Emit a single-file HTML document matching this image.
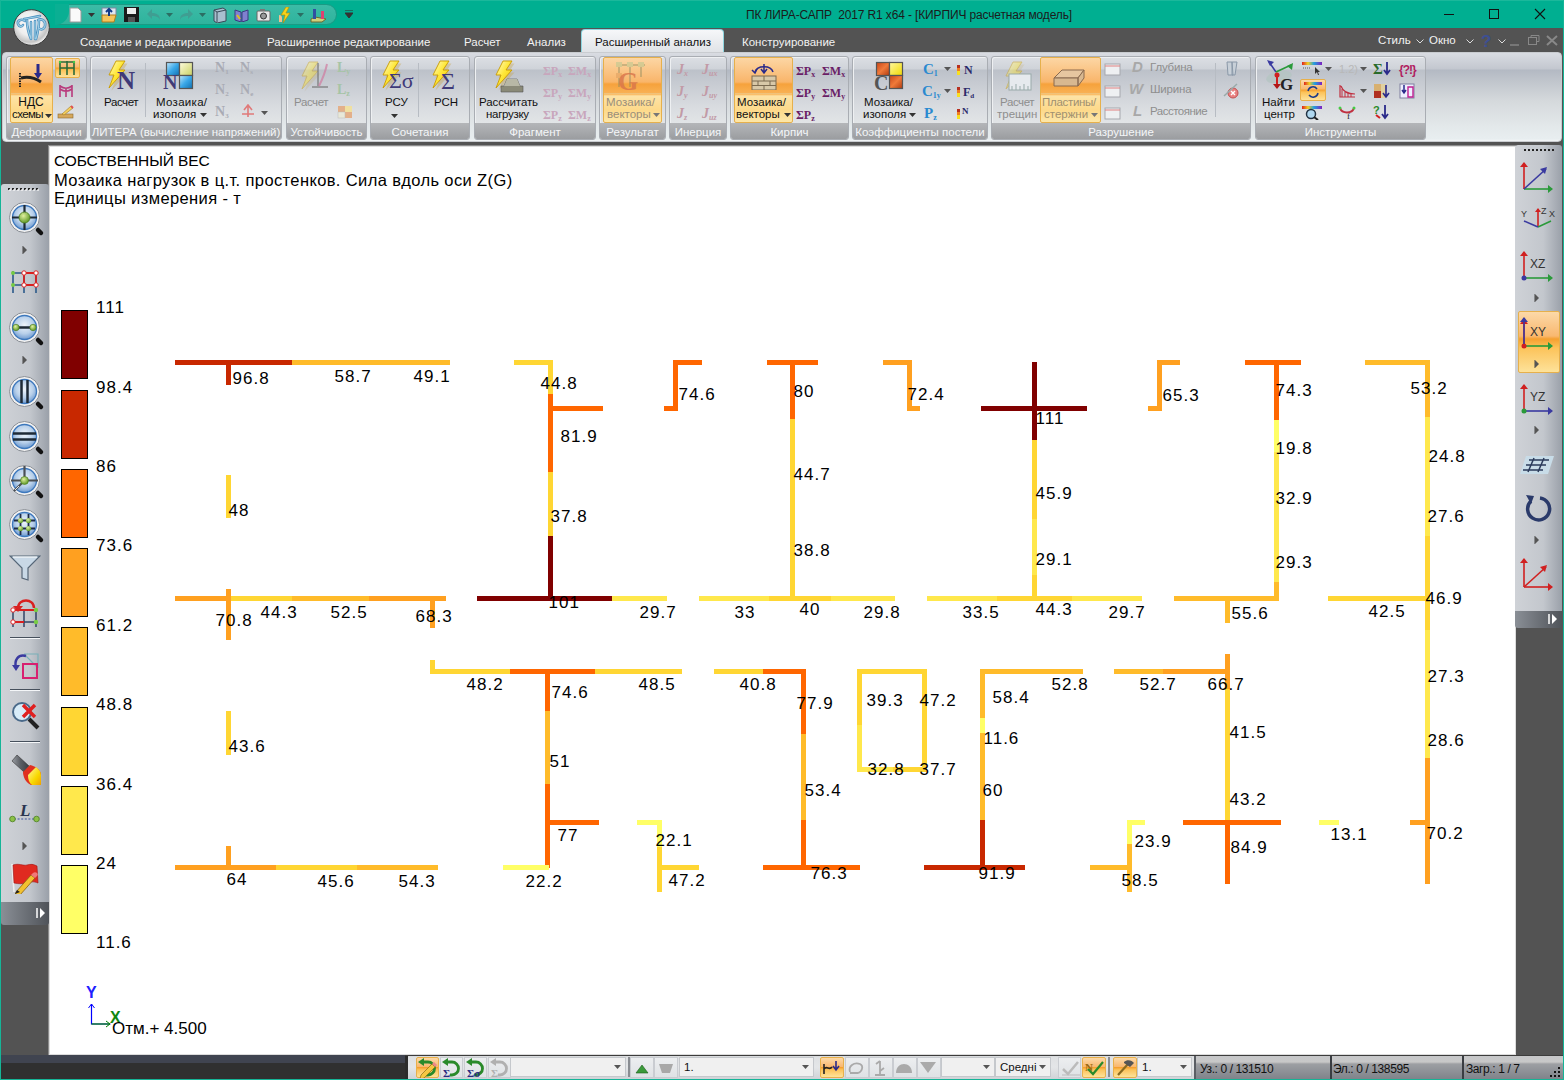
<!DOCTYPE html>
<html><head><meta charset="utf-8">
<style>
*{margin:0;padding:0;box-sizing:border-box}
html,body{width:1564px;height:1080px;overflow:hidden}
body{position:relative;background:#535353;font-family:"Liberation Sans",sans-serif;color:#000}
.a{position:absolute}
#cv{position:absolute;left:0;top:0;width:1564px;height:1080px}
#cv i{position:absolute;display:block}
#cv b{position:absolute;font-weight:normal;font-size:17px;line-height:17px;letter-spacing:1px;white-space:nowrap;color:#000}
/* title bar */
#tb{position:absolute;left:0;top:0;width:1564px;height:28px;background:#0aaf93}
#frameL{position:absolute;left:0;top:0;width:1px;height:1080px;background:#11b596}
#frameR{position:absolute;left:1563px;top:0;width:1px;height:1080px;background:#11b596}
#frameB{position:absolute;left:0;top:1079px;width:1564px;height:1px;background:#11b596}
.tab{position:absolute;top:34px;font-size:11.5px;color:#fff;white-space:nowrap;line-height:14px}
.grp{position:absolute;top:56px;height:84px;border-radius:3px;border:1px solid #a9adb3;box-shadow:inset 1px 1px 0 #eef0f2;background:linear-gradient(#dcdfe4 0px,#cfd3d9 12px,#bcc1c9 13px,#c6cad1 25px,#d9dce0 50px,#e2e5e7 67px);overflow:hidden}
.gl{position:absolute;left:0;right:0;bottom:0;height:16px;background:linear-gradient(#b4b6b9,#9b9da0);color:#f4f6f8;font-size:11.5px;line-height:18px;text-align:center;white-space:nowrap}
.bl{position:absolute;font-size:11.5px;line-height:13px;text-align:center;white-space:nowrap;color:#000}
.dis{color:#8e8e8e}
.sm{position:absolute;font-size:11.5px;line-height:13px;white-space:nowrap}
.hl{position:absolute;border:1px solid #e8b04a;border-radius:2px;background:linear-gradient(#fcd9a8 0%,#f9b870 45%,#f5a030 50%,#fcc35a 62%,#fde29a 100%)}
</style></head><body>
<div class="a" style="left:0px;top:0px;width:1564px;height:28px;background:#00af91;border-top:1px solid #1ab89b"></div>
<div class="a" style="left:55px;top:4px;width:282px;height:21px;background:linear-gradient(#3cbba6,#2fb39d);border:1px solid #1b9a84;border-radius:0 11px 11px 0;clip-path:none"></div>
<div class="a" style="left:55px;top:4px;width:14px;height:21px;background:#0aaf93;border-radius:0 0 14px 0"></div>
<svg class="a" style="left:69px;top:7px" width="13" height="16" viewBox="0 0 13 16"><path d="M1 1h8l3 3v11H1z" fill="#fafafa" stroke="#9a9a9a"/></svg>
<svg class="a" style="left:88px;top:13px" width="7" height="4" viewBox="0 0 7 4"><path d="M0 0h7L3.5 4z" fill="#333"/></svg>
<svg class="a" style="left:101px;top:7px" width="16" height="16" viewBox="0 0 16 16"><rect x="1" y="1" width="14" height="8" fill="#dfe6f0" stroke="#7a8aa0"/><path d="M1 8h14l-2 7H1z" fill="#f5c35a" stroke="#b07f1a"/><path d="M8 2v7M5 5l3-3 3 3" stroke="#123a8a" stroke-width="2" fill="none"/></svg>
<svg class="a" style="left:124px;top:7px" width="15" height="15" viewBox="0 0 15 15"><rect x="0" y="0" width="15" height="15" fill="#1a1a1a"/><rect x="3" y="1" width="9" height="6" fill="#eee"/><rect x="4" y="10" width="7" height="5" fill="#555"/></svg>
<svg class="a" style="left:146px;top:8px" width="15" height="13" viewBox="0 0 15 13"><path d="M6 1L1 6l5 5V8c4 0 7 1 8 4 0-5-3-7-8-7z" fill="#3f9e92"/></svg>
<svg class="a" style="left:166px;top:13px" width="7" height="4" viewBox="0 0 7 4"><path d="M0 0h7L3.5 4z" fill="#2b6e63"/></svg>
<svg class="a" style="left:179px;top:8px" width="15" height="13" viewBox="0 0 15 13"><path d="M9 1l5 5-5 5V8C5 8 2 9 1 12c0-5 3-7 8-7z" fill="#3f9e92"/></svg>
<svg class="a" style="left:199px;top:13px" width="7" height="4" viewBox="0 0 7 4"><path d="M0 0h7L3.5 4z" fill="#2b6e63"/></svg>
<svg class="a" style="left:212px;top:7px" width="15" height="16" viewBox="0 0 15 16"><path d="M2 3l9-2 3 2v11l-9 2-3-2z" fill="#a9bfcf" stroke="#3a4a58"/><path d="M5 5v10M2 3l3 2 9-2" stroke="#3a4a58" fill="none"/></svg>
<svg class="a" style="left:234px;top:8px" width="15" height="14" viewBox="0 0 15 14"><path d="M1 2l6 2v10l-6-2zM14 2l-6 2v10l6-2z" fill="#8080d0" stroke="#3a3a80"/><path d="M3 7l3 4" stroke="#e0c020" stroke-width="2"/></svg>
<svg class="a" style="left:256px;top:8px" width="15" height="14" viewBox="0 0 15 14"><rect x="1" y="3" width="13" height="10" rx="1" fill="#e8e8e8" stroke="#666"/><circle cx="7.5" cy="8" r="3" fill="#999" stroke="#333"/><rect x="4" y="1" width="5" height="2" fill="#777"/></svg>
<svg class="a" style="left:277px;top:7px" width="16" height="16" viewBox="0 0 16 16"><path d="M9 0l-5 8h4l-2 8 7-10H9l3-6z" fill="#f7d31a" stroke="#b38a00" stroke-width=".6"/><path d="M2 8c2 0 3 1 3 3v4H2z" fill="#f0c090"/></svg>
<svg class="a" style="left:297px;top:13px" width="7" height="4" viewBox="0 0 7 4"><path d="M0 0h7L3.5 4z" fill="#2b6e63"/></svg>
<svg class="a" style="left:310px;top:7px" width="17" height="16" viewBox="0 0 17 16"><path d="M1 12l4-2 11 2-4 3H1z" fill="#d0d07a" stroke="#6b6b30"/><rect x="3" y="2" width="3" height="10" fill="#3050a0"/><rect x="11" y="4" width="3" height="8" fill="#e04070"/></svg>
<svg class="a" style="left:345px;top:10px" width="8" height="9" viewBox="0 0 8 9"><path d="M0 0h8M0 3h8L4 8z" stroke="#333" fill="#333" stroke-width="1"/></svg>
<div class="a" style="left:746px;top:8.8px;font-size:12px;line-height:12px;color:#1c1c1c;white-space:nowrap;letter-spacing:-0.14px">ПК ЛИРА-САПР&nbsp; 2017 R1 x64 - [КИРПИЧ расчетная модель]</div>
<div class="a" style="left:1444px;top:14px;width:10px;height:1px;background:#111"></div>
<div class="a" style="left:1489px;top:9px;width:10px;height:10px;border:1px solid #111"></div>
<svg class="a" style="left:1534px;top:8px" width="12" height="12" viewBox="0 0 12 12"><path d="M1 1L11 11M11 1L1 11" stroke="#111" stroke-width="1.1"/></svg>
<div class="a" style="left:0px;top:28px;width:1564px;height:24px;background:#535353"></div>
<div class="a" style="left:581px;top:29px;width:143px;height:24px;background:linear-gradient(#f6f7f9,#dfe2e6);border:1px solid #8fd6e0;border-bottom:none;border-radius:4px 4px 0 0"></div>
<div class="a" style="left:80px;top:37.1px;font-size:11.5px;line-height:11.5px;color:#f2f2f2;white-space:nowrap;">Создание и редактирование</div>
<div class="a" style="left:267px;top:37.1px;font-size:11.5px;line-height:11.5px;color:#f2f2f2;white-space:nowrap;">Расширенное редактирование</div>
<div class="a" style="left:464px;top:37.1px;font-size:11.5px;line-height:11.5px;color:#f2f2f2;white-space:nowrap;">Расчет</div>
<div class="a" style="left:527px;top:37.1px;font-size:11.5px;line-height:11.5px;color:#f2f2f2;white-space:nowrap;">Анализ</div>
<div class="a" style="left:742px;top:37.1px;font-size:11.5px;line-height:11.5px;color:#f2f2f2;white-space:nowrap;">Конструирование</div>
<div class="a" style="left:595px;top:37.1px;font-size:11.5px;line-height:11.5px;color:#111;white-space:nowrap;">Расширенный анализ</div>
<div class="a" style="left:1378px;top:35.3px;font-size:11.5px;line-height:11.5px;color:#f2f2f2;white-space:nowrap;">Стиль</div>
<div class="a" style="left:1429px;top:35.3px;font-size:11.5px;line-height:11.5px;color:#f2f2f2;white-space:nowrap;">Окно</div>
<svg class="a" style="left:1416px;top:39px" width="8" height="5" viewBox="0 0 8 5"><path d="M0.5 0.5l3.5 3.5 3.5-3.5" stroke="#ddd" fill="none"/></svg>
<svg class="a" style="left:1466px;top:39px" width="8" height="5" viewBox="0 0 8 5"><path d="M0.5 0.5l3.5 3.5 3.5-3.5" stroke="#ddd" fill="none"/></svg>
<svg class="a" style="left:1498px;top:39px" width="8" height="5" viewBox="0 0 8 5"><path d="M0.5 0.5l3.5 3.5 3.5-3.5" stroke="#ddd" fill="none"/></svg>
<div class="a" style="left:1481px;top:32.6px;font-size:17px;line-height:17px;color:#3d4f93;white-space:nowrap;font-weight:bold">?</div>
<div class="a" style="left:1510px;top:44px;width:9px;height:2px;background:#777"></div>
<svg class="a" style="left:1528px;top:35px" width="12" height="10" viewBox="0 0 12 10"><rect x="0.5" y="2.5" width="8" height="7" fill="none" stroke="#888"/><path d="M3 2.5V.5h8v6h-2" fill="none" stroke="#888"/></svg>
<svg class="a" style="left:1546px;top:35px" width="12" height="11" viewBox="0 0 12 11"><path d="M1 1l10 9M11 1L1 10" stroke="#888" stroke-width="2"/></svg>
<svg class="a" style="left:11px;top:7px" width="41" height="41" viewBox="0 0 41 41"><defs><radialGradient id="lg" cx=".45" cy=".4" r=".6"><stop offset="0" stop-color="#ffffff"/><stop offset=".55" stop-color="#eeeeee"/><stop offset=".85" stop-color="#c4c4c4"/><stop offset="1" stop-color="#f4f4f4"/></radialGradient></defs><circle cx="20.5" cy="20.5" r="17.8" fill="url(#lg)" stroke="#3a3a3a" stroke-width="1"/><g fill="none" stroke="#4b8fbf" stroke-width="2.6" stroke-linecap="round"><path d="M14 14c-4-3-8 0-7 3 1 3 4 3 5 1"/><path d="M13 12c5-1 11-2 16-3"/><path d="M16 13c0 6 1 12 4 19M20 15v17M24 14v18M28 13c0 6-1 12-3 19"/><path d="M27 13c5-2 8 2 7 6-1 4-5 4-6 2"/></g><g fill="none" stroke="#9fd0e6" stroke-width="1.1" stroke-linecap="round"><path d="M14 14c-4-3-8 0-7 3 1 3 4 3 5 1"/><path d="M13 12c5-1 11-2 16-3"/><path d="M16 13c0 6 1 12 4 19M20 15v17M24 14v18M28 13c0 6-1 12-3 19"/><path d="M27 13c5-2 8 2 7 6-1 4-5 4-6 2"/></g></svg>
<div class="a" style="left:2px;top:52px;width:1560px;height:90px;background:linear-gradient(#d9dce2 0px,#c3c7cf 16px,#b3b9c3 17px,#c0c5cc 28px,#d5d9dc 48px,#e3e8ea 73px,#e8eef0 86px,#f4f6f7 88px);border-radius:4px;border:1px solid #c9ccd0"></div>
<div class="grp" style="left:6px;width:81px"><div class="gl">Деформации</div></div>
<div class="grp" style="left:90px;width:192px"><div class="gl">ЛИТЕРА (вычисление напряжений)</div></div>
<div class="grp" style="left:286px;width:81px"><div class="gl">Устойчивость</div></div>
<div class="grp" style="left:370px;width:100px"><div class="gl">Сочетания</div></div>
<div class="grp" style="left:474px;width:122px"><div class="gl">Фрагмент</div></div>
<div class="grp" style="left:599px;width:67px"><div class="gl">Результат</div></div>
<div class="grp" style="left:669px;width:58px"><div class="gl">Инерция</div></div>
<div class="grp" style="left:730px;width:119px"><div class="gl">Кирпич</div></div>
<div class="grp" style="left:852px;width:136px"><div class="gl">Коэффициенты постели</div></div>
<div class="grp" style="left:991px;width:260px"><div class="gl">Разрушение</div></div>
<div class="grp" style="left:1255px;width:171px"><div class="gl">Инструменты</div></div>
<div class="a" style="left:10px;top:57px;width:43px;height:66px;border:1px solid #e6b04c;border-radius:2px;background:linear-gradient(#fcd6a4 0px,#f9b56a 24px,#f6a23c 26px,#f9b256 36px,#fde3a6 38px,#fdd98a 52px,#fde7a8 64px)"></div>
<div class="a" style="left:11px;top:93px;width:41px;height:1px;background:#f0c27a"></div>
<svg class="a" style="left:17px;top:61px" width="28" height="28" viewBox="0 0 28 28"><path d="M3 12v14" stroke="#222" stroke-width="2" stroke-dasharray="1.5 1"/><path d="M4 17c8 -2 14 0 20 4" stroke="#222" stroke-width="3" fill="none"/><path d="M21 3v12" stroke="#2a2a8a" stroke-width="3"/><path d="M17 12l4 6 4-6z" fill="#2a2a8a"/></svg>
<div class="a" style="left:-119px;width:300px;text-align:center;top:96.4px;font-size:12px;line-height:12px;color:#111;white-space:nowrap;">НДС</div>
<div class="a" style="left:12px;top:109.4px;font-size:11.5px;line-height:11.5px;color:#111;white-space:nowrap;letter-spacing:-0.6px">схемы</div>
<svg class="a" style="left:45px;top:114px" width="7" height="4" viewBox="0 0 7 4"><path d="M0 0h7L3.5 4z" fill="#333"/></svg>
<div class="hl" style="left:55px;top:58px;width:25px;height:20px"></div>
<svg class="a" style="left:58px;top:60px" width="18" height="15" viewBox="0 0 18 15"><path d="M2 1v14M9 1v14M16 1v14M2 2h14M2 8h14" stroke="#2b6b3a" stroke-width="1.6" fill="none"/><circle cx="2" cy="2" r="1.2" fill="#4c4"/><circle cx="16" cy="2" r="1.2" fill="#4c4"/></svg>
<svg class="a" style="left:58px;top:83px" width="16" height="14" viewBox="0 0 16 14"><path d="M2 2v12M14 2v12M8 6v8M2 3c4 3 8 3 12 0M2 6c4 3 8 3 12 0" stroke="#b83a7c" stroke-width="1.6" fill="none"/></svg>
<svg class="a" style="left:57px;top:105px" width="17" height="14" viewBox="0 0 17 14"><rect x="1" y="9" width="15" height="4" fill="#d6a85a" stroke="#8a6a30" stroke-width=".6"/><path d="M5 9l9-8 2 2-9 7z" fill="#f5d060" stroke="#a07820" stroke-width=".6"/><path d="M14 1l2 2" stroke="#e05050" stroke-width="2"/></svg>
<svg width="0" height="0" style="position:absolute"><defs><linearGradient id="lt" x1="0" y1="0" x2="1" y2="1"><stop offset="0" stop-color="#fffbd0"/><stop offset=".45" stop-color="#ffe83a"/><stop offset="1" stop-color="#f0c000"/></linearGradient><linearGradient id="sqb" x1="0" y1="0" x2="1" y2="1"><stop offset="0" stop-color="#bfe6fb"/><stop offset=".5" stop-color="#3aa8e8"/><stop offset="1" stop-color="#1070b0"/></linearGradient><linearGradient id="sqy" x1="0" y1="0" x2="1" y2="1"><stop offset="0" stop-color="#fffce0"/><stop offset="1" stop-color="#c8d060"/></linearGradient><linearGradient id="sqo" x1="0" y1="0" x2="1" y2="1"><stop offset="0" stop-color="#c84418"/><stop offset=".5" stop-color="#f07a3a"/><stop offset="1" stop-color="#b03a10"/></linearGradient><linearGradient id="sqy2" x1="0" y1="0" x2="1" y2="1"><stop offset="0" stop-color="#fff8a0"/><stop offset="1" stop-color="#f0d800"/></linearGradient></defs></svg>
<svg class="a" style="left:106px;top:60px" width="22" height="32" viewBox="0 0 22 32"><g transform="scale(1.0)" opacity="1"><path d="M11 2h9l-6 9h6L4 29l5-13H4z" fill="#c9a040" opacity=".35" transform="translate(1.5,1.5)"/><path d="M10 1h9l-6 9h6L3 28l5-13H3z" fill="url(#lt)" stroke="#c89a00" stroke-width=".9" stroke-linejoin="round"/></g></svg>
<div class="a" style="left:117px;top:67.8px;font-size:25px;line-height:25px;color:#3f3a78;white-space:nowrap;font-family:Liberation Serif;font-weight:bold">N</div>
<div class="a" style="left:104px;top:96.9px;font-size:11.5px;line-height:11.5px;color:#111;white-space:nowrap;letter-spacing:-0.4px">Расчет</div>
<div class="a" style="left:145px;top:63px;width:1px;height:54px;background:#b7bcc3"></div>
<svg class="a" style="left:164px;top:61px" width="30" height="30" viewBox="0 0 30 30"><rect x="2.5" y="1.5" width="13" height="13" fill="url(#sqb)" stroke="#555" stroke-width="1.2"/><rect x="15.5" y="1.5" width="13" height="13" fill="url(#sqy)" stroke="#555" stroke-width="1.2"/><rect x="15.5" y="14.5" width="13" height="13" fill="url(#sqb)" stroke="#555" stroke-width="1.2"/></svg>
<div class="a" style="left:163px;top:72.1px;font-size:20px;line-height:20px;color:#3f3a78;white-space:nowrap;font-family:Liberation Serif;font-weight:bold">N</div>
<div class="a" style="left:156px;top:96.9px;font-size:11.5px;line-height:11.5px;color:#111;white-space:nowrap;letter-spacing:0.3px">Мозаика/</div>
<div class="a" style="left:153px;top:109.4px;font-size:11.5px;line-height:11.5px;color:#111;white-space:nowrap;">изополя</div>
<svg class="a" style="left:200px;top:113px" width="7" height="4" viewBox="0 0 7 4"><path d="M0 0h7L3.5 4z" fill="#333"/></svg>
<div class="a" style="left:215px;top:61.1px;font-size:14px;line-height:14px;color:#a9abb4;white-space:nowrap;font-family:Liberation Serif;font-weight:bold;line-height:14px">N<span style="font-size:7px;position:relative;top:2px">1</span></div>
<div class="a" style="left:215px;top:83.1px;font-size:14px;line-height:14px;color:#a9abb4;white-space:nowrap;font-family:Liberation Serif;font-weight:bold;line-height:14px">N<span style="font-size:7px;position:relative;top:2px">2</span></div>
<div class="a" style="left:215px;top:105.1px;font-size:14px;line-height:14px;color:#a9abb4;white-space:nowrap;font-family:Liberation Serif;font-weight:bold;line-height:14px">N<span style="font-size:7px;position:relative;top:2px">3</span></div>
<div class="a" style="left:240px;top:61.1px;font-size:14px;line-height:14px;color:#a9abb4;white-space:nowrap;font-family:Liberation Serif;font-weight:bold;line-height:14px">N<span style="font-size:7px;position:relative;top:2px">s</span></div>
<div class="a" style="left:240px;top:83.1px;font-size:14px;line-height:14px;color:#a9abb4;white-space:nowrap;font-family:Liberation Serif;font-weight:bold;line-height:14px">N<span style="font-size:7px;position:relative;top:2px">e</span></div>
<svg class="a" style="left:240px;top:104px" width="16" height="14" viewBox="0 0 16 14"><path d="M8 13V2M4 6l4-5 4 5M2 10h12" stroke="#e07a7a" stroke-width="1.6" fill="none"/></svg>
<svg class="a" style="left:261px;top:111px" width="7" height="4" viewBox="0 0 7 4"><path d="M0 0h7L3.5 4z" fill="#555"/></svg>
<svg class="a" style="left:299px;top:61px" width="22" height="32" viewBox="0 0 22 32"><g transform="scale(1.0)" opacity="0.45"><path d="M11 2h9l-6 9h6L4 29l5-13H4z" fill="#c9a040" opacity=".35" transform="translate(1.5,1.5)"/><path d="M10 1h9l-6 9h6L3 28l5-13H3z" fill="url(#lt)" stroke="#c89a00" stroke-width=".9" stroke-linejoin="round"/></g></svg>
<svg class="a" style="left:311px;top:61px" width="18" height="30" viewBox="0 0 18 30"><path d="M7 2v24M1 26h16" stroke="#777" stroke-width="2" opacity=".6"/><path d="M16 3c-2 10-5 16-8 22" stroke="#d07aa0" stroke-width="2" fill="none" opacity=".7"/></svg>
<div class="a" style="left:294px;top:96.9px;font-size:11.5px;line-height:11.5px;color:#8e8e8e;white-space:nowrap;letter-spacing:-0.4px">Расчет</div>
<div class="a" style="left:337px;top:61.1px;font-size:14px;line-height:14px;color:#a6c4a6;white-space:nowrap;font-family:Liberation Serif;font-weight:bold">L<span style="font-size:8px;position:relative;top:2px">y</span></div>
<div class="a" style="left:337px;top:83.1px;font-size:14px;line-height:14px;color:#a6c4a6;white-space:nowrap;font-family:Liberation Serif;font-weight:bold">L<span style="font-size:8px;position:relative;top:2px">z</span></div>
<svg class="a" style="left:337px;top:105px" width="16" height="14" viewBox="0 0 16 14"><rect x="1" y="1" width="7" height="6" fill="#e3b08a"/><rect x="8" y="1" width="7" height="6" fill="#f0e0a0"/><rect x="8" y="7" width="7" height="6" fill="#e3b08a"/><rect x="1" y="7" width="7" height="6" fill="#e8e8d8" stroke="#bbb" stroke-width=".5"/></svg>
<svg class="a" style="left:380px;top:60px" width="22" height="32" viewBox="0 0 22 32"><g transform="scale(1.0)" opacity="1"><path d="M11 2h9l-6 9h6L4 29l5-13H4z" fill="#c9a040" opacity=".35" transform="translate(1.5,1.5)"/><path d="M10 1h9l-6 9h6L3 28l5-13H3z" fill="url(#lt)" stroke="#c89a00" stroke-width=".9" stroke-linejoin="round"/></g></svg>
<div class="a" style="left:389px;top:70.4px;font-size:22px;line-height:22px;color:#3f3a78;white-space:nowrap;font-family:Liberation Serif">Σσ</div>
<div class="a" style="left:385px;top:96.9px;font-size:11.5px;line-height:11.5px;color:#111;white-space:nowrap;">РСУ</div>
<svg class="a" style="left:391px;top:114px" width="7" height="4" viewBox="0 0 7 4"><path d="M0 0h7L3.5 4z" fill="#333"/></svg>
<div class="a" style="left:418px;top:63px;width:1px;height:54px;background:#b7bcc3"></div>
<svg class="a" style="left:430px;top:60px" width="22" height="32" viewBox="0 0 22 32"><g transform="scale(1.0)" opacity="1"><path d="M11 2h9l-6 9h6L4 29l5-13H4z" fill="#c9a040" opacity=".35" transform="translate(1.5,1.5)"/><path d="M10 1h9l-6 9h6L3 28l5-13H3z" fill="url(#lt)" stroke="#c89a00" stroke-width=".9" stroke-linejoin="round"/></g></svg>
<div class="a" style="left:441px;top:68.7px;font-size:24px;line-height:24px;color:#3f3a78;white-space:nowrap;font-family:Liberation Serif">Σ</div>
<div class="a" style="left:434px;top:96.9px;font-size:11.5px;line-height:11.5px;color:#111;white-space:nowrap;">РСН</div>
<svg class="a" style="left:493px;top:60px" width="22" height="32" viewBox="0 0 22 32"><g transform="scale(1.0)" opacity="1"><path d="M11 2h9l-6 9h6L4 29l5-13H4z" fill="#c9a040" opacity=".35" transform="translate(1.5,1.5)"/><path d="M10 1h9l-6 9h6L3 28l5-13H3z" fill="url(#lt)" stroke="#c89a00" stroke-width=".9" stroke-linejoin="round"/></g></svg>
<svg class="a" style="left:500px;top:78px" width="24" height="15" viewBox="0 0 24 15"><path d="M7 1h10l3 7h3v6H1V8h3z" fill="#8a8a78" stroke="#555" stroke-width=".6"/><path d="M7 1h10l3 7H4z" fill="#b8b8a6"/></svg>
<div class="a" style="left:479px;top:96.9px;font-size:11.5px;line-height:11.5px;color:#111;white-space:nowrap;letter-spacing:-0.1px">Рассчитать</div>
<div class="a" style="left:486px;top:109.4px;font-size:11.5px;line-height:11.5px;color:#111;white-space:nowrap;letter-spacing:-0.3px">нагрузку</div>
<div class="a" style="left:543px;top:64.8px;font-size:12px;line-height:12px;color:#c8a6bc;white-space:nowrap;font-family:Liberation Serif;font-weight:bold">ΣP<span style="font-size:8px;position:relative;top:2px">x</span></div>
<div class="a" style="left:543px;top:86.8px;font-size:12px;line-height:12px;color:#c8a6bc;white-space:nowrap;font-family:Liberation Serif;font-weight:bold">ΣP<span style="font-size:8px;position:relative;top:2px">y</span></div>
<div class="a" style="left:543px;top:108.8px;font-size:12px;line-height:12px;color:#c8a6bc;white-space:nowrap;font-family:Liberation Serif;font-weight:bold">ΣP<span style="font-size:8px;position:relative;top:2px">z</span></div>
<div class="a" style="left:568px;top:64.8px;font-size:12px;line-height:12px;color:#c8a6bc;white-space:nowrap;font-family:Liberation Serif;font-weight:bold">ΣM<span style="font-size:8px;position:relative;top:2px">x</span></div>
<div class="a" style="left:568px;top:86.8px;font-size:12px;line-height:12px;color:#c8a6bc;white-space:nowrap;font-family:Liberation Serif;font-weight:bold">ΣM<span style="font-size:8px;position:relative;top:2px">y</span></div>
<div class="a" style="left:568px;top:108.8px;font-size:12px;line-height:12px;color:#c8a6bc;white-space:nowrap;font-family:Liberation Serif;font-weight:bold">ΣM<span style="font-size:8px;position:relative;top:2px">z</span></div>
<div class="a" style="left:603px;top:57px;width:59px;height:66px;border:1px solid #e6b04c;border-radius:2px;background:linear-gradient(#fcd6a4 0px,#f9b56a 24px,#f6a23c 26px,#f9b256 36px,#fde3a6 38px,#fdd98a 52px,#fde7a8 64px)"></div>
<div class="a" style="left:604px;top:93px;width:57px;height:1px;background:#f0c27a"></div>
<svg class="a" style="left:615px;top:62px" width="34" height="30" viewBox="0 0 34 30"><g opacity=".55"><path d="M4 3h26M4 3v22M15 3v22M26 3v12" stroke="#8a8a60" stroke-width="1.5" fill="none"/><rect x="1" y="0" width="6" height="5" fill="#b8c890"/><rect x="12" y="0" width="6" height="5" fill="#b8c890"/><rect x="23" y="0" width="6" height="5" fill="#b8c890"/><rect x="1" y="11" width="6" height="5" fill="#e0a060"/></g></svg>
<div class="a" style="left:618px;top:69.0px;font-size:26px;line-height:26px;color:#d9744a;white-space:nowrap;font-family:Liberation Serif;font-weight:bold;opacity:.8">G</div>
<div class="a" style="left:606px;top:96.9px;font-size:11.5px;line-height:11.5px;color:#9a8e7a;white-space:nowrap;">Мозаика/</div>
<div class="a" style="left:607px;top:109.4px;font-size:11.5px;line-height:11.5px;color:#9a8e7a;white-space:nowrap;">векторы</div>
<svg class="a" style="left:653px;top:113px" width="7" height="4" viewBox="0 0 7 4"><path d="M0 0h7L3.5 4z" fill="#777"/></svg>
<div class="a" style="left:677px;top:63.1px;font-size:14px;line-height:14px;color:#c29aa6;white-space:nowrap;font-family:Liberation Serif;font-weight:bold;font-style:italic">J<span style="font-size:8px;position:relative;top:2px">x</span></div>
<div class="a" style="left:677px;top:85.1px;font-size:14px;line-height:14px;color:#c29aa6;white-space:nowrap;font-family:Liberation Serif;font-weight:bold;font-style:italic">J<span style="font-size:8px;position:relative;top:2px">y</span></div>
<div class="a" style="left:677px;top:107.1px;font-size:14px;line-height:14px;color:#c29aa6;white-space:nowrap;font-family:Liberation Serif;font-weight:bold;font-style:italic">J<span style="font-size:8px;position:relative;top:2px">z</span></div>
<div class="a" style="left:702px;top:63.1px;font-size:14px;line-height:14px;color:#c29aa6;white-space:nowrap;font-family:Liberation Serif;font-weight:bold;font-style:italic">J<span style="font-size:8px;position:relative;top:2px">ux</span></div>
<div class="a" style="left:702px;top:85.1px;font-size:14px;line-height:14px;color:#c29aa6;white-space:nowrap;font-family:Liberation Serif;font-weight:bold;font-style:italic">J<span style="font-size:8px;position:relative;top:2px">uy</span></div>
<div class="a" style="left:702px;top:107.1px;font-size:14px;line-height:14px;color:#c29aa6;white-space:nowrap;font-family:Liberation Serif;font-weight:bold;font-style:italic">J<span style="font-size:8px;position:relative;top:2px">uz</span></div>
<div class="a" style="left:734px;top:57px;width:59px;height:66px;border:1px solid #e6b04c;border-radius:2px;background:linear-gradient(#fcd6a4 0px,#f9b56a 24px,#f6a23c 26px,#f9b256 36px,#fde3a6 38px,#fdd98a 52px,#fde7a8 64px)"></div>
<div class="a" style="left:735px;top:93px;width:57px;height:1px;background:#f0c27a"></div>
<svg class="a" style="left:749px;top:62px" width="30" height="28" viewBox="0 0 30 28"><path d="M6 10c2-7 16-7 18 0" stroke="#2a2a8a" stroke-width="1.5" fill="none"/><path d="M15 2v8M12 7l3 4 3-4M3 8l3 3 2-4" stroke="#2a2a8a" stroke-width="1.5" fill="none"/><rect x="3" y="14" width="24" height="14" fill="#d8c8a8" stroke="#7a6a50"/><path d="M3 19h24M3 23.5h24M15 14v5M9 19v4.5M21 19v4.5M15 23.5v4.5" stroke="#7a6a50"/></svg>
<div class="a" style="left:737px;top:96.9px;font-size:11.5px;line-height:11.5px;color:#111;white-space:nowrap;">Мозаика/</div>
<div class="a" style="left:736px;top:109.4px;font-size:11.5px;line-height:11.5px;color:#111;white-space:nowrap;">векторы</div>
<svg class="a" style="left:784px;top:113px" width="7" height="4" viewBox="0 0 7 4"><path d="M0 0h7L3.5 4z" fill="#333"/></svg>
<div class="a" style="left:796px;top:64.8px;font-size:12px;line-height:12px;color:#6a1e66;white-space:nowrap;font-family:Liberation Serif;font-weight:bold">ΣP<span style="font-size:8px;position:relative;top:2px">x</span></div>
<div class="a" style="left:796px;top:86.8px;font-size:12px;line-height:12px;color:#6a1e66;white-space:nowrap;font-family:Liberation Serif;font-weight:bold">ΣP<span style="font-size:8px;position:relative;top:2px">y</span></div>
<div class="a" style="left:796px;top:108.8px;font-size:12px;line-height:12px;color:#6a1e66;white-space:nowrap;font-family:Liberation Serif;font-weight:bold">ΣP<span style="font-size:8px;position:relative;top:2px">z</span></div>
<div class="a" style="left:822px;top:64.8px;font-size:12px;line-height:12px;color:#6a1e66;white-space:nowrap;font-family:Liberation Serif;font-weight:bold">ΣM<span style="font-size:8px;position:relative;top:2px">x</span></div>
<div class="a" style="left:822px;top:86.8px;font-size:12px;line-height:12px;color:#6a1e66;white-space:nowrap;font-family:Liberation Serif;font-weight:bold">ΣM<span style="font-size:8px;position:relative;top:2px">y</span></div>
<svg class="a" style="left:875px;top:61px" width="30" height="30" viewBox="0 0 30 30"><rect x="1.5" y="1.5" width="13" height="13" fill="url(#sqo)" stroke="#555" stroke-width="1.2"/><rect x="14.5" y="1.5" width="13" height="13" fill="url(#sqy2)" stroke="#555" stroke-width="1.2"/><rect x="14.5" y="14.5" width="13" height="13" fill="url(#sqo)" stroke="#555" stroke-width="1.2"/></svg>
<div class="a" style="left:874px;top:73.1px;font-size:20px;line-height:20px;color:#555;white-space:nowrap;font-family:Liberation Serif;font-weight:bold">C</div>
<div class="a" style="left:864px;top:96.9px;font-size:11.5px;line-height:11.5px;color:#111;white-space:nowrap;">Мозаика/</div>
<div class="a" style="left:863px;top:109.4px;font-size:11.5px;line-height:11.5px;color:#111;white-space:nowrap;">изополя</div>
<svg class="a" style="left:909px;top:113px" width="7" height="4" viewBox="0 0 7 4"><path d="M0 0h7L3.5 4z" fill="#333"/></svg>
<div class="a" style="left:923px;top:62.3px;font-size:15px;line-height:15px;color:#2a8ad0;white-space:nowrap;font-family:Liberation Serif;font-weight:bold">C<span style="font-size:8px;position:relative;top:2px">1</span></div>
<div class="a" style="left:922px;top:84.3px;font-size:15px;line-height:15px;color:#2a8ad0;white-space:nowrap;font-family:Liberation Serif;font-weight:bold">C<span style="font-size:8px;position:relative;top:2px">1y</span></div>
<div class="a" style="left:924px;top:106.3px;font-size:15px;line-height:15px;color:#2a8ad0;white-space:nowrap;font-family:Liberation Serif;font-weight:bold">P<span style="font-size:8px;position:relative;top:2px">z</span></div>
<svg class="a" style="left:944px;top:67px" width="7" height="4" viewBox="0 0 7 4"><path d="M0 0h7L3.5 4z" fill="#555"/></svg>
<svg class="a" style="left:944px;top:89px" width="7" height="4" viewBox="0 0 7 4"><path d="M0 0h7L3.5 4z" fill="#555"/></svg>
<svg class="a" style="left:956px;top:62px" width="18" height="14" viewBox="0 0 18 14"><rect x="1" y="3" width="3" height="3" fill="#b83020"/><rect x="1" y="6" width="3" height="3" fill="#f08020"/><rect x="1" y="9" width="3" height="4" fill="#f8e020"/></svg>
<svg class="a" style="left:956px;top:84px" width="18" height="14" viewBox="0 0 18 14"><rect x="1" y="3" width="3" height="3" fill="#b83020"/><rect x="1" y="6" width="3" height="3" fill="#f08020"/><rect x="1" y="9" width="3" height="4" fill="#f8e020"/></svg>
<svg class="a" style="left:956px;top:106px" width="18" height="14" viewBox="0 0 18 14"><rect x="1" y="3" width="3" height="3" fill="#b83020"/><rect x="1" y="6" width="3" height="3" fill="#f08020"/><rect x="1" y="9" width="3" height="4" fill="#f8e020"/></svg>
<div class="a" style="left:964px;top:63.8px;font-size:12px;line-height:12px;color:#2a2a6a;white-space:nowrap;font-family:Liberation Serif;font-weight:bold">N</div>
<div class="a" style="left:963px;top:85.8px;font-size:12px;line-height:12px;color:#2a2a6a;white-space:nowrap;font-family:Liberation Serif;font-weight:bold">F<span style="font-size:7px;position:relative;top:2px">d</span></div>
<div class="a" style="left:962px;top:107.4px;font-size:9px;line-height:9px;color:#2a2a6a;white-space:nowrap;font-family:Liberation Serif;font-weight:bold">N</div>
<svg class="a" style="left:1003px;top:61px" width="22" height="32" viewBox="0 0 22 32"><g transform="scale(1.0)" opacity="0.45"><path d="M11 2h9l-6 9h6L4 29l5-13H4z" fill="#c9a040" opacity=".35" transform="translate(1.5,1.5)"/><path d="M10 1h9l-6 9h6L3 28l5-13H3z" fill="url(#lt)" stroke="#c89a00" stroke-width=".9" stroke-linejoin="round"/></g></svg>
<svg class="a" style="left:1008px;top:73px" width="24" height="18" viewBox="0 0 24 18"><rect x="1" y="1" width="22" height="16" fill="#e6eaee" stroke="#9aa" /><path d="M4 17v-4M8 17v-6M12 17v-4M16 17v-6M20 17v-4" stroke="#9aa"/></svg>
<div class="a" style="left:1000px;top:96.9px;font-size:11.5px;line-height:11.5px;color:#8e8e8e;white-space:nowrap;letter-spacing:-0.4px">Расчет</div>
<div class="a" style="left:997px;top:109.4px;font-size:11.5px;line-height:11.5px;color:#8e8e8e;white-space:nowrap;">трещин</div>
<div class="a" style="left:1040px;top:57px;width:61px;height:66px;border:1px solid #e6b04c;border-radius:2px;background:linear-gradient(#fcd6a4 0px,#f9b56a 24px,#f6a23c 26px,#f9b256 36px,#fde3a6 38px,#fdd98a 52px,#fde7a8 64px)"></div>
<div class="a" style="left:1041px;top:93px;width:59px;height:1px;background:#f0c27a"></div>
<svg class="a" style="left:1053px;top:69px" width="32" height="18" viewBox="0 0 32 18"><path d="M1 9l8-8h22l-6 8z" fill="#e6c6a0" stroke="#8a6a50"/><path d="M1 9h24v8H1zM25 9l6-8v8l-6 8z" fill="#d8b890" stroke="#8a6a50"/></svg>
<div class="a" style="left:1042px;top:96.9px;font-size:11.5px;line-height:11.5px;color:#a09070;white-space:nowrap;letter-spacing:-0.3px">Пластины/</div>
<div class="a" style="left:1044px;top:109.4px;font-size:11.5px;line-height:11.5px;color:#a09070;white-space:nowrap;">стержни</div>
<svg class="a" style="left:1091px;top:113px" width="7" height="4" viewBox="0 0 7 4"><path d="M0 0h7L3.5 4z" fill="#777"/></svg>
<svg class="a" style="left:1104px;top:63px" width="17" height="13" viewBox="0 0 17 13"><rect x="1" y="1" width="15" height="11" fill="#eef0f2" stroke="#a6a8ae"/><path d="M1 3h15" stroke="#e08080"/></svg>
<svg class="a" style="left:1104px;top:85px" width="17" height="13" viewBox="0 0 17 13"><rect x="1" y="1" width="15" height="11" fill="#eef0f2" stroke="#a6a8ae"/><path d="M1 3h15" stroke="#e08080"/></svg>
<svg class="a" style="left:1104px;top:107px" width="17" height="13" viewBox="0 0 17 13"><rect x="1" y="1" width="15" height="11" fill="#eef0f2" stroke="#a6a8ae"/><path d="M1 3h15" stroke="#e08080"/></svg>
<div class="a" style="left:1132px;top:59.3px;font-size:15px;line-height:15px;color:#a8a8a8;white-space:nowrap;font-weight:bold;font-style:italic">D</div>
<div class="a" style="left:1129px;top:81.3px;font-size:15px;line-height:15px;color:#a8a8a8;white-space:nowrap;font-weight:bold;font-style:italic">W</div>
<div class="a" style="left:1133px;top:103.3px;font-size:15px;line-height:15px;color:#a8a8a8;white-space:nowrap;font-weight:bold;font-style:italic">L</div>
<div class="a" style="left:1150px;top:62.3px;font-size:11.5px;line-height:11.5px;color:#8e8e8e;white-space:nowrap;letter-spacing:-0.2px">Глубина</div>
<div class="a" style="left:1150px;top:84.3px;font-size:11.5px;line-height:11.5px;color:#8e8e8e;white-space:nowrap;letter-spacing:-0.2px">Ширина</div>
<div class="a" style="left:1150px;top:106.3px;font-size:11.5px;line-height:11.5px;color:#8e8e8e;white-space:nowrap;letter-spacing:-0.5px">Расстояние</div>
<div class="a" style="left:1215px;top:63px;width:1px;height:54px;background:#b7bcc3"></div>
<svg class="a" style="left:1224px;top:60px" width="16" height="16" viewBox="0 0 16 16"><path d="M3 2h5l1 13H4zM8 2h5l-2 13H8z" fill="#c8d0d8" stroke="#8a98a8"/></svg>
<svg class="a" style="left:1223px;top:83px" width="18" height="16" viewBox="0 0 18 16"><circle cx="10" cy="10" r="5" fill="#e88080" stroke="#c05050"/><path d="M8 8l4 4M12 8l-4 4" stroke="#fff" stroke-width="1.4"/><path d="M1 13L14 1" stroke="#9aa" stroke-width="1.5"/></svg>
<svg class="a" style="left:1265px;top:58px" width="34" height="34" viewBox="0 0 34 34"><ellipse cx="14" cy="19" rx="13" ry="6" fill="#b4c4c2" opacity=".8" transform="rotate(-12 14 19)"/><path d="M11 14L4 4" stroke="#3a3aa0" stroke-width="1.6"/><path d="M2 2l7 2-4 4z" fill="#3a3aa0"/><path d="M11 14l15-7" stroke="#2a9a3a" stroke-width="1.6"/><path d="M28 5l-1 7-5-4z" fill="#2a9a3a"/><circle cx="12" cy="17" r="2.5" fill="#d02020"/><path d="M12 18v10" stroke="#d02020" stroke-width="2"/><path d="M8 26l4 5 4-5z" fill="#b01818"/></svg>
<div class="a" style="left:1280px;top:75.6px;font-size:17px;line-height:17px;color:#222;white-space:nowrap;font-family:Liberation Serif;font-weight:bold">G</div>
<div class="a" style="left:1262px;top:96.9px;font-size:11.5px;line-height:11.5px;color:#111;white-space:nowrap;">Найти</div>
<div class="a" style="left:1264px;top:109.4px;font-size:11.5px;line-height:11.5px;color:#111;white-space:nowrap;">центр</div>
<svg class="a" style="left:1301px;top:61px" width="22" height="14" viewBox="0 0 22 14"><rect x="1" y="1" width="20" height="3" fill="url(#rb)"/><defs><linearGradient id="rb"><stop offset="0" stop-color="#e02020"/><stop offset=".3" stop-color="#f0d020"/><stop offset=".6" stop-color="#20a0e0"/><stop offset="1" stop-color="#8020c0"/></linearGradient></defs><path d="M2 7h8" stroke="#555" stroke-dasharray="1 1"/><path d="M14 6l5 5-2 0 1 3-1 0-1-3-2 2z" fill="#333"/></svg>
<svg class="a" style="left:1325px;top:67px" width="7" height="4" viewBox="0 0 7 4"><path d="M0 0h7L3.5 4z" fill="#555"/></svg>
<div class="hl" style="left:1300px;top:79px;width:26px;height:22px"></div>
<svg class="a" style="left:1303px;top:81px" width="20" height="18" viewBox="0 0 20 18"><rect x="1" y="1" width="18" height="3" fill="url(#rb)"/><path d="M5 10a5 5 0 0 1 9-2M15 12a5 5 0 0 1-9 2" stroke="#1a3a8a" stroke-width="1.5" fill="none"/></svg>
<svg class="a" style="left:1301px;top:105px" width="22" height="15" viewBox="0 0 22 15"><rect x="1" y="1" width="20" height="3" fill="url(#rb)"/><circle cx="10" cy="9" r="4.5" fill="#b0d8f0" stroke="#234" stroke-width="1.5"/><path d="M13 12l4 3" stroke="#222" stroke-width="2"/></svg>
<div class="a" style="left:1339px;top:63.7px;font-size:11px;line-height:11px;color:#b8b8b8;white-space:nowrap;">1.2)</div>
<svg class="a" style="left:1360px;top:67px" width="7" height="4" viewBox="0 0 7 4"><path d="M0 0h7L3.5 4z" fill="#555"/></svg>
<svg class="a" style="left:1360px;top:89px" width="7" height="4" viewBox="0 0 7 4"><path d="M0 0h7L3.5 4z" fill="#555"/></svg>
<svg class="a" style="left:1339px;top:84px" width="17" height="14" viewBox="0 0 17 14"><path d="M1 1v12h15M2 2c2 6 8 8 14 8" stroke="#c03040" fill="none" stroke-width="1.2"/><path d="M3 5v8M6 8v5M9 9v4M12 10v3" stroke="#c03040"/></svg>
<svg class="a" style="left:1338px;top:105px" width="18" height="15" viewBox="0 0 18 15"><path d="M2 3c2 6 12 6 14 0" stroke="#c03040" stroke-width="2" fill="none"/><circle cx="2" cy="3" r="1.5" fill="#4c4"/><circle cx="16" cy="3" r="1.5" fill="#4c4"/><text x="9" y="14" font-size="9" font-family="Liberation Serif" fill="#222">f</text></svg>
<div class="a" style="left:1373px;top:62.3px;font-size:15px;line-height:15px;color:#2a6a2a;white-space:nowrap;font-family:Liberation Serif;font-weight:bold">Σ</div>
<svg class="a" style="left:1383px;top:61px" width="8" height="15" viewBox="0 0 8 15"><path d="M4 1v12M1 9l3 4 3-4" stroke="#2a2a8a" stroke-width="1.8" fill="none"/></svg>
<svg class="a" style="left:1373px;top:83px" width="18" height="16" viewBox="0 0 18 16"><rect x="1" y="1" width="7" height="7" fill="#d8b070"/><rect x="1" y="8" width="7" height="7" fill="#b03020"/><rect x="8" y="1" width="5" height="14" fill="#e0d0a0"/><path d="M13 2v12M10 10l3 4 3-4" stroke="#2a2a8a" stroke-width="1.6" fill="none"/></svg>
<svg class="a" style="left:1372px;top:104px" width="18" height="16" viewBox="0 0 18 16"><text x="1" y="10" font-size="11" font-weight="bold" fill="#2a8a2a" font-family="Liberation Sans">?</text><path d="M4 11l4 3" stroke="#d02020" stroke-width="2"/><path d="M13 1v13M10 10l3 4 3-4" stroke="#2a2a8a" stroke-width="1.8" fill="none"/></svg>
<div class="a" style="left:1399px;top:63.8px;font-size:12px;line-height:12px;color:#b02060;white-space:nowrap;font-weight:bold;letter-spacing:-1px">{?!}</div>
<svg class="a" style="left:1399px;top:83px" width="17" height="16" viewBox="0 0 17 16"><rect x="1" y="1" width="14" height="14" fill="#eef" stroke="#8080a0"/><path d="M9 4h5v10H9z" fill="none" stroke="#c02090" stroke-width="1.4"/><path d="M5 2v7M3 7l2 3 2-3" stroke="#2a2a8a" stroke-width="1.5" fill="none"/></svg>
<div class="a" style="left:48px;top:145px;width:1468px;height:911px;background:#dcdcdc;border-left:1px solid #8c8c8c;border-top:1px solid #8c8c8c"></div>
<div class="a" style="left:50px;top:147px;width:1465px;height:907px;background:#fff"></div>
<div class="a" style="left:1px;top:184px;width:48px;height:720px;border-radius:3px 3px 0 0;background:linear-gradient(90deg,#cfd2d7 0%,#c3c7cd 60%,#9aa0a9 100%)"></div>
<div class="a" style="left:1px;top:902px;width:48px;height:23px;background:linear-gradient(90deg,#8a8f96,#4f5359);border-radius:0 0 3px 3px"></div>
<svg class="a" style="left:36px;top:907px" width="10" height="12" viewBox="0 0 10 12"><path d="M1 1v10" stroke="#fff" stroke-width="1.5"/><path d="M4 1l5 5-5 5z" fill="#fff"/></svg>
<svg class="a" style="left:8px;top:188px" width="32" height="4" viewBox="0 0 32 4"><rect x="0" y="0" width="2" height="2" fill="#222"/><rect x="1" y="1" width="2" height="2" fill="#fff" opacity=".6"/><rect x="4" y="0" width="2" height="2" fill="#222"/><rect x="5" y="1" width="2" height="2" fill="#fff" opacity=".6"/><rect x="8" y="0" width="2" height="2" fill="#222"/><rect x="9" y="1" width="2" height="2" fill="#fff" opacity=".6"/><rect x="12" y="0" width="2" height="2" fill="#222"/><rect x="13" y="1" width="2" height="2" fill="#fff" opacity=".6"/><rect x="16" y="0" width="2" height="2" fill="#222"/><rect x="17" y="1" width="2" height="2" fill="#fff" opacity=".6"/><rect x="20" y="0" width="2" height="2" fill="#222"/><rect x="21" y="1" width="2" height="2" fill="#fff" opacity=".6"/><rect x="24" y="0" width="2" height="2" fill="#222"/><rect x="25" y="1" width="2" height="2" fill="#fff" opacity=".6"/><rect x="28" y="0" width="2" height="2" fill="#222"/><rect x="29" y="1" width="2" height="2" fill="#fff" opacity=".6"/></svg>
<svg width="0" height="0" style="position:absolute"><defs><radialGradient id="zg" cx=".5" cy=".4" r=".6"><stop offset="0" stop-color="#eef4fa"/><stop offset=".6" stop-color="#b8d0ea"/><stop offset="1" stop-color="#6e9ad0"/></radialGradient><radialGradient id="gd" cx=".4" cy=".35" r=".6"><stop offset="0" stop-color="#e0f0a0"/><stop offset="1" stop-color="#6aa030"/></radialGradient></defs></svg>
<svg class="a" style="left:7px;top:200px" width="38" height="38" viewBox="0 0 38 38"><path d="M31 30l3 3" stroke="#111" stroke-width="4.5" stroke-linecap="round"/><circle cx="17.5" cy="17.5" r="15" fill="#f2f2f2" stroke="#8a8f96" stroke-width="1"/><circle cx="17.5" cy="17.5" r="12" fill="url(#zg)" stroke="#3d78bd" stroke-width="1.3"/><path d="M17.5 5v25M5 17.5h25" stroke="#1e2a36" stroke-width="2.2"/><circle cx="17.5" cy="17.5" r="5.5" fill="url(#gd)" stroke="#4a7a20" stroke-width=".8"/></svg>
<svg class="a" style="left:22px;top:246px" width="6" height="8" viewBox="0 0 6 8"><path d="M0 0v8" stroke="#444"/><path d="M1 0l4 4-4 4z" fill="#555"/></svg>
<svg class="a" style="left:10px;top:267px" width="30" height="30" viewBox="0 0 30 30"><path d="M3 4v22M14 4v22M26 4v22M3 6h23M3 18h23" stroke="#2b5a8a" stroke-width="1.6" fill="none"/><path d="M14 6h12M14 18h12M14 6v12M26 6v12" stroke="#d82020" stroke-width="1.8"/><circle cx="3" cy="6" r="2" fill="#7c4"/><circle cx="3" cy="18" r="2" fill="#7c4"/><circle cx="14" cy="6" r="2.2" fill="#fff" stroke="#d22"/><circle cx="26" cy="6" r="2.2" fill="#fff" stroke="#d22"/><circle cx="14" cy="18" r="2.2" fill="#fff" stroke="#d22"/><circle cx="26" cy="18" r="2.2" fill="#fff" stroke="#d22"/></svg>
<svg class="a" style="left:7px;top:310px" width="38" height="38" viewBox="0 0 38 38"><path d="M31 30l3 3" stroke="#111" stroke-width="4.5" stroke-linecap="round"/><circle cx="17.5" cy="17.5" r="15" fill="#f2f2f2" stroke="#8a8f96" stroke-width="1"/><circle cx="17.5" cy="17.5" r="12" fill="url(#zg)" stroke="#3d78bd" stroke-width="1.3"/><path d="M9 17.5h17" stroke="#1e2a36" stroke-width="2.5"/><circle cx="9" cy="17.5" r="3.2" fill="url(#gd)" stroke="#4a7a20" stroke-width=".6"/><circle cx="26" cy="17.5" r="3.2" fill="url(#gd)" stroke="#4a7a20" stroke-width=".6"/></svg>
<svg class="a" style="left:22px;top:356px" width="6" height="8" viewBox="0 0 6 8"><path d="M0 0v8" stroke="#444"/><path d="M1 0l4 4-4 4z" fill="#555"/></svg>
<svg class="a" style="left:7px;top:374px" width="38" height="38" viewBox="0 0 38 38"><path d="M31 30l3 3" stroke="#111" stroke-width="4.5" stroke-linecap="round"/><circle cx="17.5" cy="17.5" r="15" fill="#f2f2f2" stroke="#8a8f96" stroke-width="1"/><circle cx="17.5" cy="17.5" r="12" fill="url(#zg)" stroke="#3d78bd" stroke-width="1.3"/><path d="M14.5 6v23M20.5 6v23" stroke="#1e2a36" stroke-width="2.5"/></svg>
<svg class="a" style="left:7px;top:419px" width="38" height="38" viewBox="0 0 38 38"><path d="M31 30l3 3" stroke="#111" stroke-width="4.5" stroke-linecap="round"/><circle cx="17.5" cy="17.5" r="15" fill="#f2f2f2" stroke="#8a8f96" stroke-width="1"/><circle cx="17.5" cy="17.5" r="12" fill="url(#zg)" stroke="#3d78bd" stroke-width="1.3"/><path d="M6 14.5h23M6 20.5h23" stroke="#1e2a36" stroke-width="2.5"/></svg>
<svg class="a" style="left:7px;top:463px" width="38" height="38" viewBox="0 0 38 38"><path d="M31 30l3 3" stroke="#111" stroke-width="4.5" stroke-linecap="round"/><circle cx="17.5" cy="17.5" r="15" fill="#f2f2f2" stroke="#8a8f96" stroke-width="1"/><circle cx="17.5" cy="17.5" r="12" fill="url(#zg)" stroke="#3d78bd" stroke-width="1.3"/><path d="M17.5 3v14.5M4 17.5h27" stroke="#4a4f55" stroke-width="2.2"/><path d="M17.5 17.5L7 28" stroke="#4a4f55" stroke-width="2.2"/><path d="M12 23L8 27" stroke="#dfe3e8" stroke-width="1"/><circle cx="17.5" cy="17.5" r="4" fill="url(#gd)" stroke="#4a7a20" stroke-width=".6"/></svg>
<svg class="a" style="left:7px;top:507px" width="38" height="38" viewBox="0 0 38 38"><path d="M31 30l3 3" stroke="#111" stroke-width="4.5" stroke-linecap="round"/><circle cx="17.5" cy="17.5" r="15" fill="#f2f2f2" stroke="#8a8f96" stroke-width="1"/><circle cx="17.5" cy="17.5" r="12" fill="url(#zg)" stroke="#3d78bd" stroke-width="1.3"/><path d="M7 13.5h21M7 21.5h21M13.5 7v21M21.5 7v21" stroke="#1e2a46" stroke-width="1.8"/><circle cx="13.5" cy="13.5" r="2.6" fill="url(#gd)"/><circle cx="21.5" cy="13.5" r="2.6" fill="url(#gd)"/><circle cx="13.5" cy="21.5" r="2.6" fill="url(#gd)"/><circle cx="21.5" cy="21.5" r="2.6" fill="url(#gd)"/></svg>
<svg class="a" style="left:9px;top:554px" width="32" height="28" viewBox="0 0 32 28"><path d="M1 2h30L19 14v12l-6-2V14z" fill="#c8d8e6" stroke="#556677" stroke-width="1.2"/><path d="M4 3h24" stroke="#fff"/></svg>
<svg class="a" style="left:10px;top:595px" width="32" height="34" viewBox="0 0 32 34"><path d="M3 14v18M14 14v18M26 14v18M3 15h23M3 27h23" stroke="#334466" stroke-width="1.5" fill="none"/><path d="M3 15h23M3 27h11" stroke="#d82020" stroke-width="1.8"/><path d="M8 13c0-10 16-10 16 0" stroke="#d82020" stroke-width="2.5" fill="none"/><path d="M3 11l5 6 5-6z" fill="#d82020"/><circle cx="3" cy="15" r="2.2" fill="#fff" stroke="#d22"/><circle cx="26" cy="15" r="2.2" fill="#7c4"/><circle cx="3" cy="27" r="2.2" fill="#fff" stroke="#d22"/><circle cx="26" cy="27" r="2.2" fill="#7c4"/></svg>
<div class="a" style="left:10px;top:638px;width:30px;height:1px;background:#f4f6f8"></div>
<div class="a" style="left:10px;top:637px;width:30px;height:1px;background:#46505c"></div>
<svg class="a" style="left:10px;top:648px" width="32" height="32" viewBox="0 0 32 32"><path d="M14 6l14 14M14 6h14v14" stroke="#7ab0b8" stroke-width="1.2" fill="none"/><rect x="13" y="16" width="14" height="14" fill="none" stroke="#d82070" stroke-width="2"/><path d="M16 8c-8-2-12 4-10 12" stroke="#3a3aa0" stroke-width="2.5" fill="none"/><path d="M2 17l4 6 4-6z" fill="#3a3aa0"/></svg>
<div class="a" style="left:10px;top:690px;width:30px;height:1px;background:#f4f6f8"></div>
<div class="a" style="left:10px;top:689px;width:30px;height:1px;background:#46505c"></div>
<svg class="a" style="left:10px;top:700px" width="32" height="32" viewBox="0 0 32 32"><circle cx="12" cy="12" r="9" fill="#d8ecf8" stroke="#4a6a8a" stroke-width="2"/><path d="M19 19l9 9" stroke="#222" stroke-width="4"/><path d="M13 5l12 12M25 5L13 17" stroke="#e02020" stroke-width="3.5"/></svg>
<div class="a" style="left:10px;top:742px;width:30px;height:1px;background:#f4f6f8"></div>
<div class="a" style="left:10px;top:741px;width:30px;height:1px;background:#46505c"></div>
<svg class="a" style="left:9px;top:753px" width="34" height="34" viewBox="0 0 34 34"><defs><linearGradient id="fl1" x1="0" y1="0" x2="1" y2="0"><stop offset="0" stop-color="#9a9ea4"/><stop offset=".5" stop-color="#5a5e64"/><stop offset="1" stop-color="#3a3e44"/></linearGradient><linearGradient id="fl2" x1="0" y1="0" x2="1" y2="1"><stop offset="0" stop-color="#fff7a0"/><stop offset=".6" stop-color="#f8d800"/><stop offset="1" stop-color="#f0a000"/></linearGradient></defs><path d="M3 8l5-6 12 11-5 6z" fill="url(#fl1)" stroke="#333" stroke-width=".6"/><path d="M14 19l7-7c5 1 10 4 11 9v11H22c-5-2-8-8-8-13z" fill="#e03020"/><path d="M19 22l8-8c3 2 5 5 5 8v10H23c-3-2-4-6-4-10z" fill="url(#fl2)"/></svg>
<svg class="a" style="left:8px;top:802px" width="34" height="22" viewBox="0 0 34 22"><text x="12" y="14" font-family="Liberation Serif" font-style="italic" font-weight="bold" font-size="17" fill="#2a3550">L</text><path d="M6 17h22" stroke="#6a7ab0" stroke-width="1.5" stroke-dasharray="2 1.6"/><circle cx="4.5" cy="17" r="2.8" fill="#8cc048" stroke="#4a8020" stroke-width=".8"/><circle cx="28.5" cy="17" r="2.8" fill="#8cc048" stroke="#4a8020" stroke-width=".8"/></svg>
<svg class="a" style="left:22px;top:842px" width="6" height="8" viewBox="0 0 6 8"><path d="M0 0v8" stroke="#444"/><path d="M1 0l4 4-4 4z" fill="#555"/></svg>
<svg class="a" style="left:9px;top:862px" width="32" height="32" viewBox="0 0 32 32"><path d="M3 2l2 28" stroke="#eee" stroke-width="1.6"/><path d="M4 3c6-2 10 1 14 0s6-1 10 1l1 17c-5-2-7-1-11 0s-8 1-13 0z" fill="#e02a20" stroke="#a01010" stroke-width=".6"/><path d="M7 30l15-17 4 3-15 17-5 1z" fill="#f2c230" stroke="#8a6010" stroke-width=".8"/><path d="M22 13l2-2c1-1 3-1 4 0s1 2 0 3l-2 2z" fill="#f07a7a"/><path d="M6 32l2-4 3 2z" fill="#222"/></svg>
<div class="a" style="left:1515px;top:145px;width:47px;height:466px;border-radius:3px 3px 0 0;background:linear-gradient(90deg,#cfd2d7 0%,#c3c7cd 60%,#9aa0a9 100%)"></div>
<div class="a" style="left:1515px;top:611px;width:47px;height:17px;background:linear-gradient(90deg,#8a8f96,#4f5359);border-radius:0 0 3px 3px"></div>
<svg class="a" style="left:1548px;top:613px" width="10" height="12" viewBox="0 0 10 12"><path d="M1 1v10" stroke="#fff" stroke-width="1.5"/><path d="M4 1l5 5-5 5z" fill="#fff"/></svg>
<svg class="a" style="left:1524px;top:149px" width="32" height="4" viewBox="0 0 32 4"><rect x="0" y="0" width="2" height="2" fill="#222"/><rect x="4" y="0" width="2" height="2" fill="#222"/><rect x="8" y="0" width="2" height="2" fill="#222"/><rect x="12" y="0" width="2" height="2" fill="#222"/><rect x="16" y="0" width="2" height="2" fill="#222"/><rect x="20" y="0" width="2" height="2" fill="#222"/><rect x="24" y="0" width="2" height="2" fill="#222"/><rect x="28" y="0" width="2" height="2" fill="#222"/></svg>
<svg class="a" style="left:1518px;top:159px" width="40" height="36" viewBox="0 0 40 36"><path d="M6 30V4" stroke="#d02020" stroke-width="1.6"/><path d="M2 8l4-5 4 5z" fill="#d02020"/><path d="M6 30h28" stroke="#2a9a3a" stroke-width="1.6"/><path d="M30 26l5 4-5 4z" fill="#2a9a3a"/><path d="M6 30L28 10" stroke="#3a3aa0" stroke-width="1.6"/><path d="M22 10l7-2-2 7z" fill="#3a3aa0"/></svg>
<svg class="a" style="left:1518px;top:203px" width="40" height="36" viewBox="0 0 40 36"><path d="M20 24V6" stroke="#d02020" stroke-width="1.6"/><path d="M17 9l3-4 3 4z" fill="#d02020"/><path d="M20 24l13-6" stroke="#2a9a3a" stroke-width="1.6"/><path d="M20 24L6 18" stroke="#3a3aa0" stroke-width="1.6"/><text x="23" y="11" font-size="9" fill="#333" font-family="Liberation Sans">Z</text><text x="3" y="14" font-size="9" fill="#333" font-family="Liberation Sans">Y</text><text x="31" y="14" font-size="9" fill="#333" font-family="Liberation Sans">X</text></svg>
<svg class="a" style="left:1518px;top:248px" width="40" height="36" viewBox="0 0 40 36"><path d="M6 30V4" stroke="#d02020" stroke-width="1.6"/><path d="M2 8l4-5 4 5z" fill="#d02020"/><path d="M6 30h28" stroke="#2a9a3a" stroke-width="1.6"/><path d="M30 26l5 4-5 4z" fill="#2a9a3a"/><text x="12" y="20" font-family="Liberation Sans" font-size="12" fill="#333">XZ</text><circle cx="6" cy="30" r="2.5" fill="#3a3aa0"/></svg>
<svg class="a" style="left:1534px;top:294px" width="6" height="8" viewBox="0 0 6 8"><path d="M0 0v8" stroke="#444"/><path d="M1 0l4 4-4 4z" fill="#555"/></svg>
<div class="a" style="left:1518px;top:311px;width:42px;height:62px;border:1px solid #e6b04c;border-radius:2px;background:linear-gradient(#fcd9a8 0%,#f9b870 40%,#f5a030 45%,#fcc35a 60%,#fde29a 100%)"></div>
<svg class="a" style="left:1518px;top:316px" width="40" height="36" viewBox="0 0 40 36"><path d="M6 30V4" stroke="#d02020" stroke-width="1.6"/><path d="M2 8l4-5 4 5z" fill="#d02020"/><path d="M6 30h28" stroke="#2a9a3a" stroke-width="1.6"/><path d="M30 26l5 4-5 4z" fill="#2a9a3a"/><text x="12" y="20" font-family="Liberation Sans" font-size="12" fill="#333">XY</text><circle cx="6" cy="30" r="2.5" fill="#d02020"/></svg>
<svg class="a" style="left:1518px;top:314px" width="40" height="36" viewBox="0 0 40 36"><path d="M6 30V4" stroke="#3a3aa0" stroke-width="1.6"/><path d="M2 8l4-5 4 5z" fill="#3a3aa0"/></svg>
<svg class="a" style="left:1534px;top:360px" width="6" height="8" viewBox="0 0 6 8"><path d="M0 0v8" stroke="#444"/><path d="M1 0l4 4-4 4z" fill="#555"/></svg>
<svg class="a" style="left:1518px;top:381px" width="40" height="36" viewBox="0 0 40 36"><path d="M6 30V4" stroke="#d02020" stroke-width="1.6"/><path d="M2 8l4-5 4 5z" fill="#d02020"/><path d="M6 30h28" stroke="#3a3aa0" stroke-width="1.6"/><path d="M30 26l5 4-5 4z" fill="#3a3aa0"/><text x="12" y="20" font-family="Liberation Sans" font-size="12" fill="#333">YZ</text><circle cx="6" cy="30" r="2.5" fill="#2a9a3a"/></svg>
<svg class="a" style="left:1534px;top:426px" width="6" height="8" viewBox="0 0 6 8"><path d="M0 0v8" stroke="#444"/><path d="M1 0l4 4-4 4z" fill="#555"/></svg>
<svg class="a" style="left:1520px;top:454px" width="36" height="22" viewBox="0 0 36 22"><path d="M6 2h28l-6 18H0z" fill="#c8dce8"/><path d="M9 6h20M6 11h20M3 16h20M14 4l-6 14M24 4l-6 14" stroke="#2a3a5a" stroke-width="1.5"/></svg>
<svg class="a" style="left:1522px;top:493px" width="32" height="32" viewBox="0 0 32 32"><path d="M9 8a11 11 0 1 0 9-3" stroke="#2a3a6a" stroke-width="3.5" fill="none"/><path d="M4 2l8 1-3 8z" fill="#2a3a6a"/></svg>
<svg class="a" style="left:1534px;top:536px" width="6" height="8" viewBox="0 0 6 8"><path d="M0 0v8" stroke="#444"/><path d="M1 0l4 4-4 4z" fill="#555"/></svg>
<svg class="a" style="left:1518px;top:555px" width="40" height="36" viewBox="0 0 40 36"><path d="M6 32V4" stroke="#d02020" stroke-width="1.6"/><path d="M2 8l4-5 4 5z" fill="#d02020"/><path d="M6 32h28" stroke="#d02020" stroke-width="1.6"/><path d="M30 28l5 4-5 4z" fill="#d02020"/><path d="M6 32L28 12" stroke="#d02020" stroke-width="1.6"/><path d="M22 12l7-2-2 7z" fill="#d02020"/></svg>
<div class="a" style="left:1px;top:1055px;width:1562px;height:8px;background:#404450"></div>
<div class="a" style="left:1px;top:1063px;width:1562px;height:16px;background:#303030"></div>
<div class="a" style="left:405px;top:1055px;width:1158px;height:24px;background:linear-gradient(#c9cbce 0px,#dfe1e3 2px,#e4e6e8 12px,#d0d3d7 24px);border-left:3px solid #2c2c2c"></div>
<div class="a" style="left:440px;top:1057px;width:23px;height:21px;background:linear-gradient(#eceef0,#dfe2e5);border:1px solid #c9ccd1"></div>
<div class="a" style="left:464px;top:1057px;width:23px;height:21px;background:linear-gradient(#eceef0,#dfe2e5);border:1px solid #c9ccd1"></div>
<div class="a" style="left:488px;top:1057px;width:23px;height:21px;background:linear-gradient(#eceef0,#dfe2e5);border:1px solid #c9ccd1"></div>
<div class="hl" style="left:416px;top:1057px;width:23px;height:21px"></div>
<svg class="a" style="left:417px;top:1058px" width="22" height="20" viewBox="0 0 22 20"><path d="M6 4h5a6.5 6.5 0 0 1 0 13H9" stroke="#2a8a2a" stroke-width="2.8" fill="none"/><path d="M1 4l6-4v8z" fill="#2a8a2a"/><path d="M4 17l11-11 3 3-11 11-4 1z" fill="#f5c842" stroke="#8a6a10" stroke-width=".7"/><path d="M15 6l2-2 3 3-2 2z" fill="#e88"/></svg>
<svg class="a" style="left:441px;top:1058px" width="22" height="20" viewBox="0 0 22 20"><path d="M6 4h5a6.5 6.5 0 0 1 0 13H9" stroke="#2a8a2a" stroke-width="2.8" fill="none"/><path d="M1 4l6-4v8z" fill="#2a8a2a"/><text x="2" y="19" font-size="11" font-family="Liberation Serif" font-weight="bold" fill="#2a2a80">Σ</text></svg>
<svg class="a" style="left:465px;top:1058px" width="22" height="20" viewBox="0 0 22 20"><path d="M6 4h5a6.5 6.5 0 0 1 0 13H9" stroke="#2a8a2a" stroke-width="2.8" fill="none"/><path d="M1 4l6-4v8z" fill="#2a8a2a"/><text x="2" y="19" font-size="11" font-family="Liberation Serif" font-weight="bold" fill="#2a2a80">Σσ</text></svg>
<svg class="a" style="left:489px;top:1058px" width="22" height="20" viewBox="0 0 22 20"><path d="M6 4h5a6.5 6.5 0 0 1 0 13H9" stroke="#b0b0b0" stroke-width="2.8" fill="none"/><path d="M1 4l6-4v8z" fill="#b0b0b0"/><text x="2" y="19" font-size="11" font-family="Liberation Serif" font-weight="bold" fill="#b0b0b0">Σ</text></svg>
<div class="a" style="left:510px;top:1057px;width:116px;height:20px;background:#f0f0f0;border:1px solid #c5c8cc;font-size:11.5px;line-height:18px;padding-left:4px;color:#111;white-space:nowrap;overflow:hidden"></div>
<svg class="a" style="left:614px;top:1065px" width="7" height="4" viewBox="0 0 7 4"><path d="M0 0h7L3.5 4z" fill="#555"/></svg>
<div class="a" style="left:628px;top:1057px;width:2px;height:20px;background:#8a8d92"></div>
<div class="a" style="left:630px;top:1057px;width:24px;height:21px;background:linear-gradient(#eceef0,#dfe2e5);border:1px solid #c9ccd1"></div>
<div class="a" style="left:654px;top:1057px;width:24px;height:21px;background:linear-gradient(#eceef0,#dfe2e5);border:1px solid #c9ccd1"></div>
<svg class="a" style="left:633px;top:1061px" width="18" height="14" viewBox="0 0 18 14"><path d="M3 12l6-8 6 8z" fill="#3a9a3a" stroke="#1a5a1a" stroke-width=".6"/></svg>
<svg class="a" style="left:657px;top:1061px" width="18" height="14" viewBox="0 0 18 14"><path d="M2 3h14l-3 9H5z" fill="#a8a8a8"/></svg>
<div class="a" style="left:679px;top:1057px;width:135px;height:20px;background:#f0f0f0;border:1px solid #c5c8cc;font-size:11.5px;line-height:18px;padding-left:4px;color:#111;white-space:nowrap;overflow:hidden">1.</div>
<svg class="a" style="left:802px;top:1065px" width="7" height="4" viewBox="0 0 7 4"><path d="M0 0h7L3.5 4z" fill="#555"/></svg>
<div class="a" style="left:845px;top:1057px;width:24px;height:21px;background:linear-gradient(#eceef0,#dfe2e5);border:1px solid #c9ccd1"></div>
<div class="a" style="left:869px;top:1057px;width:24px;height:21px;background:linear-gradient(#eceef0,#dfe2e5);border:1px solid #c9ccd1"></div>
<div class="a" style="left:893px;top:1057px;width:24px;height:21px;background:linear-gradient(#eceef0,#dfe2e5);border:1px solid #c9ccd1"></div>
<div class="a" style="left:917px;top:1057px;width:24px;height:21px;background:linear-gradient(#eceef0,#dfe2e5);border:1px solid #c9ccd1"></div>
<div class="hl" style="left:820px;top:1057px;width:24px;height:21px"></div>
<svg class="a" style="left:822px;top:1060px" width="20" height="16" viewBox="0 0 20 16"><path d="M2 4v10M2 9c3-4 5 2 8-2" stroke="#222" stroke-width="1.6" fill="none"/><path d="M14 1v8M11 6l3 4 3-4" stroke="#2a2a8a" stroke-width="1.6" fill="none"/></svg>
<svg class="a" style="left:846px;top:1060px" width="20" height="16" viewBox="0 0 20 16"><path d="M4 12c-2-6 4-10 10-8 4 2 2 8-2 9H4" stroke="#aaa" stroke-width="1.8" fill="none"/></svg>
<svg class="a" style="left:870px;top:1060px" width="20" height="16" viewBox="0 0 20 16"><path d="M10 1v14M6 4l4-3M14 8l-4 3M5 15h10" stroke="#aaa" stroke-width="1.8" fill="none"/></svg>
<svg class="a" style="left:894px;top:1060px" width="20" height="16" viewBox="0 0 20 16"><path d="M2 13c0-12 16-12 16 0z" fill="#aaa"/></svg>
<svg class="a" style="left:918px;top:1060px" width="20" height="16" viewBox="0 0 20 16"><path d="M2 2h16l-8 11z" fill="#aaa"/></svg>
<div class="a" style="left:941px;top:1057px;width:54px;height:20px;background:#f0f0f0;border:1px solid #c5c8cc;font-size:11.5px;line-height:18px;padding-left:4px;color:#111;white-space:nowrap;overflow:hidden"></div>
<svg class="a" style="left:983px;top:1065px" width="7" height="4" viewBox="0 0 7 4"><path d="M0 0h7L3.5 4z" fill="#555"/></svg>
<div class="a" style="left:995px;top:1057px;width:56px;height:20px;background:#f0f0f0;border:1px solid #c5c8cc;font-size:11.5px;line-height:18px;padding-left:4px;color:#111;white-space:nowrap;overflow:hidden">Средні</div>
<svg class="a" style="left:1039px;top:1065px" width="7" height="4" viewBox="0 0 7 4"><path d="M0 0h7L3.5 4z" fill="#555"/></svg>
<div class="a" style="left:1058px;top:1057px;width:23px;height:21px;background:linear-gradient(#eceef0,#dfe2e5);border:1px solid #c9ccd1"></div>
<svg class="a" style="left:1060px;top:1059px" width="22" height="18" viewBox="0 0 22 18"><path d="M3 10l5 5 10-12" stroke="#bbb" stroke-width="2.5" fill="none"/><path d="M2 16h18" stroke="#bbb"/></svg>
<div class="hl" style="left:1082px;top:1057px;width:24px;height:21px"></div>
<svg class="a" style="left:1083px;top:1059px" width="22" height="18" viewBox="0 0 22 18"><text x="2" y="12" font-size="11" font-weight="bold" fill="#9a6a10" font-family="Liberation Serif">N</text><path d="M5 10l5 5 10-12" stroke="#2a8a2a" stroke-width="2.2" fill="none"/></svg>
<div class="a" style="left:1108px;top:1057px;width:2px;height:20px;background:#8a8d92"></div>
<div class="hl" style="left:1113px;top:1057px;width:24px;height:21px"></div>
<svg class="a" style="left:1115px;top:1059px" width="20" height="17" viewBox="0 0 20 17"><path d="M3 16L13 5" stroke="#8a6a20" stroke-width="2.2"/><path d="M9 3c3-3 8-2 10 1l-4 4-6-4z" fill="#555"/></svg>
<div class="a" style="left:1137px;top:1057px;width:55px;height:20px;background:#f0f0f0;border:1px solid #c5c8cc;font-size:11.5px;line-height:18px;padding-left:4px;color:#111;white-space:nowrap;overflow:hidden">1.</div>
<svg class="a" style="left:1180px;top:1065px" width="7" height="4" viewBox="0 0 7 4"><path d="M0 0h7L3.5 4z" fill="#555"/></svg>
<div class="a" style="left:1194px;top:1056px;width:2px;height:23px;background:#5a5e64"></div>
<div class="a" style="left:1196px;top:1056px;width:367px;height:23px;background:linear-gradient(#c6c7c9 0px,#c8c8c8 6px,#9d9fa3 8px,#8d9096 16px,#7f838a 23px)"></div>
<div class="a" style="left:405px;top:1055px;width:1158px;height:1px;background:#3c3c3c"></div>
<div class="a" style="left:1200px;top:1062.8px;font-size:12px;line-height:12px;color:#111;white-space:nowrap;letter-spacing:-0.4px">Уз.: 0 / 131510</div>
<div class="a" style="left:1330px;top:1056px;width:2px;height:23px;background:#3a3d42"></div>
<div class="a" style="left:1333px;top:1062.8px;font-size:12px;line-height:12px;color:#111;white-space:nowrap;letter-spacing:-0.4px">Эл.: 0 / 138595</div>
<div class="a" style="left:1462px;top:1056px;width:2px;height:23px;background:#3a3d42"></div>
<div class="a" style="left:1466px;top:1062.8px;font-size:12px;line-height:12px;color:#111;white-space:nowrap;letter-spacing:-0.4px">Загр.: 1 / 7</div>
<svg class="a" style="left:1550px;top:1066px" width="12" height="12" viewBox="0 0 12 12"><rect x="8" y="1" width="2" height="2" fill="#111"/><rect x="4" y="5" width="2" height="2" fill="#111"/><rect x="8" y="5" width="2" height="2" fill="#111"/><rect x="0" y="9" width="2" height="2" fill="#111"/><rect x="4" y="9" width="2" height="2" fill="#111"/><rect x="8" y="9" width="2" height="2" fill="#111"/></svg>
<div class="a" style="left:0px;top:0px;width:1px;height:1080px;background:#15b597"></div>
<div class="a" style="left:1563px;top:0px;width:1px;height:1080px;background:#15b597"></div>
<div class="a" style="left:0px;top:1079px;width:1564px;height:1px;background:#15b597"></div><div id="cv"><div class="a" style="left:54px;top:152.6px;font-size:15.5px;line-height:16.5px;white-space:nowrap;letter-spacing:-0.1px">СОБСТВЕННЫЙ ВЕС</div>
<div class="a" style="left:54px;top:171.8px;font-size:16.5px;line-height:16.5px;white-space:nowrap;letter-spacing:0.38px">Мозаика нагрузок в ц.т. простенков. Сила вдоль оси Z(G)</div>
<div class="a" style="left:54px;top:190.1px;font-size:16.5px;line-height:16.5px;white-space:nowrap;letter-spacing:0.38px">Единицы измерения - т</div>
<svg class="a" style="left:80px;top:980px" width="50" height="50" viewBox="0 0 50 50">
<text x="6" y="18" font-family="Liberation Sans" font-weight="bold" font-size="16" fill="#2020ff">Y</text>
<path d="M11.5 24v20h19" stroke="#0000ff" stroke-width="1.2" fill="none"/>
<path d="M8.5 28l3-4 3 4" stroke="#0000ff" stroke-width="1" fill="none"/>
<path d="M11.5 44h18" stroke="#008000" stroke-width="1.2"/>
<path d="M26 41l4 3-4 3" stroke="#008000" stroke-width="1" fill="none"/>
<text x="30" y="43" font-family="Liberation Sans" font-weight="bold" font-size="16" fill="#118811">X</text>
</svg>
<div class="a" style="left:112px;top:1020.4px;font-size:17px;line-height:17px;white-space:nowrap">Отм.+ 4.500</div>
<i style="left:175px;top:360px;width:117px;height:5px;background:#c82800"></i>
<i style="left:292px;top:360px;width:158px;height:5px;background:#ffbb2a"></i>
<i style="left:226px;top:360px;width:5px;height:25px;background:#c82800"></i>
<i style="left:226px;top:475px;width:5px;height:43px;background:#ffd633"></i>
<i style="left:175px;top:596px;width:51px;height:5px;background:#ffa020"></i>
<i style="left:231px;top:596px;width:61px;height:5px;background:#ffd633"></i>
<i style="left:292px;top:596px;width:77px;height:5px;background:#ffbb2a"></i>
<i style="left:369px;top:596px;width:77px;height:5px;background:#ffa020"></i>
<i style="left:226px;top:589px;width:5px;height:51px;background:#ffa020"></i>
<i style="left:430px;top:596px;width:5px;height:32px;background:#ffa020"></i>
<i style="left:226px;top:711px;width:5px;height:44px;background:#ffd633"></i>
<i style="left:175px;top:865px;width:101px;height:5px;background:#ffa020"></i>
<i style="left:276px;top:865px;width:81px;height:5px;background:#ffd633"></i>
<i style="left:357px;top:865px;width:81px;height:5px;background:#ffbb2a"></i>
<i style="left:226px;top:846px;width:5px;height:19px;background:#ffa020"></i>
<i style="left:514px;top:360px;width:39px;height:5px;background:#ffd633"></i>
<i style="left:548px;top:360px;width:5px;height:34px;background:#ffd633"></i>
<i style="left:548px;top:394px;width:5px;height:78px;background:#ff6600"></i>
<i style="left:548px;top:472px;width:5px;height:64px;background:#ffd633"></i>
<i style="left:548px;top:536px;width:5px;height:65px;background:#800000"></i>
<i style="left:548px;top:406px;width:55px;height:5px;background:#ff6600"></i>
<i style="left:477px;top:596px;width:135px;height:5px;background:#800000"></i>
<i style="left:612px;top:596px;width:55px;height:5px;background:#ffe84c"></i>
<i style="left:675px;top:360px;width:27px;height:5px;background:#ff6600"></i>
<i style="left:673px;top:360px;width:5px;height:51px;background:#ff6600"></i>
<i style="left:664px;top:406px;width:14px;height:5px;background:#ff6600"></i>
<i style="left:699px;top:596px;width:70px;height:5px;background:#ffe84c"></i>
<i style="left:769px;top:596px;width:62px;height:5px;background:#ffd633"></i>
<i style="left:831px;top:596px;width:64px;height:5px;background:#ffe84c"></i>
<i style="left:790px;top:360px;width:5px;height:59px;background:#ff6600"></i>
<i style="left:790px;top:419px;width:5px;height:182px;background:#ffd633"></i>
<i style="left:767px;top:360px;width:51px;height:5px;background:#ff6600"></i>
<i style="left:883px;top:360px;width:29px;height:5px;background:#ffa020"></i>
<i style="left:907px;top:360px;width:5px;height:51px;background:#ffa020"></i>
<i style="left:907px;top:406px;width:13px;height:5px;background:#ffa020"></i>
<i style="left:1032px;top:362px;width:5px;height:78px;background:#800000"></i>
<i style="left:1032px;top:440px;width:5px;height:79px;background:#ffd633"></i>
<i style="left:1032px;top:519px;width:5px;height:56px;background:#ffe84c"></i>
<i style="left:1032px;top:575px;width:5px;height:26px;background:#ffd633"></i>
<i style="left:981px;top:406px;width:106px;height:5px;background:#800000"></i>
<i style="left:927px;top:596px;width:70px;height:5px;background:#ffe84c"></i>
<i style="left:997px;top:596px;width:75px;height:5px;background:#ffd633"></i>
<i style="left:1072px;top:596px;width:70px;height:5px;background:#ffe84c"></i>
<i style="left:1159px;top:360px;width:21px;height:5px;background:#ffa020"></i>
<i style="left:1157px;top:360px;width:5px;height:51px;background:#ffa020"></i>
<i style="left:1148px;top:406px;width:14px;height:5px;background:#ffa020"></i>
<i style="left:1245px;top:360px;width:56px;height:5px;background:#ff6600"></i>
<i style="left:1274px;top:360px;width:5px;height:60px;background:#ff6600"></i>
<i style="left:1274px;top:420px;width:5px;height:32px;background:#ffff66"></i>
<i style="left:1274px;top:452px;width:5px;height:130px;background:#ffe84c"></i>
<i style="left:1274px;top:582px;width:5px;height:19px;background:#ffbb2a"></i>
<i style="left:1174px;top:596px;width:105px;height:5px;background:#ffbb2a"></i>
<i style="left:1225px;top:596px;width:5px;height:27px;background:#ffbb2a"></i>
<i style="left:1365px;top:360px;width:65px;height:5px;background:#ffbb2a"></i>
<i style="left:1425px;top:360px;width:5px;height:57px;background:#ffbb2a"></i>
<i style="left:1425px;top:417px;width:5px;height:119px;background:#ffe84c"></i>
<i style="left:1425px;top:536px;width:5px;height:94px;background:#ffd633"></i>
<i style="left:1425px;top:630px;width:5px;height:128px;background:#ffe84c"></i>
<i style="left:1425px;top:758px;width:5px;height:126px;background:#ffa020"></i>
<i style="left:1328px;top:596px;width:102px;height:5px;background:#ffd633"></i>
<i style="left:1410px;top:820px;width:20px;height:5px;background:#ffa020"></i>
<i style="left:430px;top:660px;width:5px;height:14px;background:#ffd633"></i>
<i style="left:432px;top:669px;width:78px;height:5px;background:#ffd633"></i>
<i style="left:510px;top:669px;width:85px;height:5px;background:#ff6600"></i>
<i style="left:595px;top:669px;width:87px;height:5px;background:#ffd633"></i>
<i style="left:545px;top:669px;width:5px;height:42px;background:#ff6600"></i>
<i style="left:545px;top:711px;width:5px;height:73px;background:#ffbb2a"></i>
<i style="left:545px;top:784px;width:5px;height:84px;background:#ff6600"></i>
<i style="left:545px;top:820px;width:54px;height:5px;background:#ff6600"></i>
<i style="left:503px;top:865px;width:46px;height:5px;background:#ffff66"></i>
<i style="left:637px;top:820px;width:25px;height:5px;background:#ffff66"></i>
<i style="left:657px;top:820px;width:5px;height:27px;background:#ffff66"></i>
<i style="left:657px;top:847px;width:5px;height:45px;background:#ffd633"></i>
<i style="left:657px;top:865px;width:42px;height:5px;background:#ffd633"></i>
<i style="left:714px;top:669px;width:49px;height:5px;background:#ffd633"></i>
<i style="left:763px;top:669px;width:43px;height:5px;background:#ff6600"></i>
<i style="left:801px;top:669px;width:5px;height:65px;background:#ff6600"></i>
<i style="left:801px;top:734px;width:5px;height:86px;background:#ffbb2a"></i>
<i style="left:801px;top:820px;width:5px;height:50px;background:#ff6600"></i>
<i style="left:763px;top:865px;width:97px;height:5px;background:#ff6600"></i>
<i style="left:857px;top:669px;width:70px;height:5px;background:#ffd633"></i>
<i style="left:857px;top:669px;width:5px;height:56px;background:#ffd633"></i>
<i style="left:857px;top:725px;width:5px;height:47px;background:#ffe84c"></i>
<i style="left:922px;top:669px;width:5px;height:103px;background:#ffd633"></i>
<i style="left:857px;top:767px;width:36px;height:5px;background:#ffe84c"></i>
<i style="left:893px;top:767px;width:34px;height:5px;background:#ffd633"></i>
<i style="left:980px;top:669px;width:103px;height:5px;background:#ffbb2a"></i>
<i style="left:980px;top:669px;width:5px;height:49px;background:#ffbb2a"></i>
<i style="left:980px;top:718px;width:5px;height:15px;background:#ffff66"></i>
<i style="left:980px;top:733px;width:5px;height:87px;background:#ffbb2a"></i>
<i style="left:980px;top:820px;width:5px;height:50px;background:#c82800"></i>
<i style="left:924px;top:865px;width:101px;height:5px;background:#c82800"></i>
<i style="left:1114px;top:669px;width:49px;height:5px;background:#ffbb2a"></i>
<i style="left:1163px;top:669px;width:67px;height:5px;background:#ffa020"></i>
<i style="left:1225px;top:654px;width:5px;height:35px;background:#ffa020"></i>
<i style="left:1225px;top:689px;width:5px;height:131px;background:#ffd633"></i>
<i style="left:1225px;top:820px;width:5px;height:64px;background:#ff6600"></i>
<i style="left:1183px;top:820px;width:98px;height:5px;background:#ff6600"></i>
<i style="left:1127px;top:820px;width:18px;height:5px;background:#ffff66"></i>
<i style="left:1127px;top:820px;width:5px;height:24px;background:#ffff66"></i>
<i style="left:1127px;top:844px;width:5px;height:48px;background:#ffbb2a"></i>
<i style="left:1090px;top:865px;width:42px;height:5px;background:#ffbb2a"></i>
<i style="left:1319px;top:820px;width:20px;height:5px;background:#ffff66"></i>
<b style="left:232.5px;top:369.6px">96.8</b>
<b style="left:334.5px;top:367.6px">58.7</b>
<b style="left:413.5px;top:367.6px">49.1</b>
<b style="left:228.5px;top:501.6px">48</b>
<b style="left:215.5px;top:611.6px">70.8</b>
<b style="left:260.5px;top:603.6px">44.3</b>
<b style="left:330.5px;top:603.6px">52.5</b>
<b style="left:415.5px;top:607.6px">68.3</b>
<b style="left:228.5px;top:737.6px">43.6</b>
<b style="left:226.5px;top:870.6px">64</b>
<b style="left:317.5px;top:872.6px">45.6</b>
<b style="left:398.5px;top:872.6px">54.3</b>
<b style="left:540.5px;top:374.6px">44.8</b>
<b style="left:560.5px;top:427.6px">81.9</b>
<b style="left:678.5px;top:385.6px">74.6</b>
<b style="left:550.5px;top:507.6px">37.8</b>
<b style="left:548.5px;top:593.6px">101</b>
<b style="left:639.5px;top:603.6px">29.7</b>
<b style="left:734.5px;top:603.6px">33</b>
<b style="left:793.5px;top:382.6px">80</b>
<b style="left:793.5px;top:465.6px">44.7</b>
<b style="left:907.5px;top:385.6px">72.4</b>
<b style="left:1035.5px;top:409.6px">111</b>
<b style="left:1035.5px;top:484.6px">45.9</b>
<b style="left:793.5px;top:541.6px">38.8</b>
<b style="left:799.5px;top:600.6px">40</b>
<b style="left:863.5px;top:603.6px">29.8</b>
<b style="left:962.5px;top:603.6px">33.5</b>
<b style="left:1035.5px;top:550.6px">29.1</b>
<b style="left:1035.5px;top:600.6px">44.3</b>
<b style="left:1108.5px;top:603.6px">29.7</b>
<b style="left:1162.5px;top:386.6px">65.3</b>
<b style="left:1275.5px;top:381.6px">74.3</b>
<b style="left:1275.5px;top:439.6px">19.8</b>
<b style="left:1275.5px;top:489.6px">32.9</b>
<b style="left:1275.5px;top:553.6px">29.3</b>
<b style="left:1231.5px;top:604.6px">55.6</b>
<b style="left:1410.5px;top:379.6px">53.2</b>
<b style="left:1428.5px;top:447.6px">24.8</b>
<b style="left:1427.5px;top:507.6px">27.6</b>
<b style="left:1425.5px;top:589.6px">46.9</b>
<b style="left:1368.5px;top:602.6px">42.5</b>
<b style="left:466.5px;top:675.6px">48.2</b>
<b style="left:551.5px;top:683.6px">74.6</b>
<b style="left:638.5px;top:675.6px">48.5</b>
<b style="left:549.5px;top:752.6px">51</b>
<b style="left:557.5px;top:826.6px">77</b>
<b style="left:525.5px;top:872.6px">22.2</b>
<b style="left:655.5px;top:831.6px">22.1</b>
<b style="left:668.5px;top:871.6px">47.2</b>
<b style="left:739.5px;top:675.6px">40.8</b>
<b style="left:796.5px;top:694.6px">77.9</b>
<b style="left:804.5px;top:781.6px">53.4</b>
<b style="left:810.5px;top:864.6px">76.3</b>
<b style="left:866.5px;top:691.6px">39.3</b>
<b style="left:919.5px;top:691.6px">47.2</b>
<b style="left:867.5px;top:760.6px">32.8</b>
<b style="left:919.5px;top:760.6px">37.7</b>
<b style="left:992.5px;top:688.6px">58.4</b>
<b style="left:983.5px;top:729.6px">11.6</b>
<b style="left:982.5px;top:781.6px">60</b>
<b style="left:978.5px;top:864.6px">91.9</b>
<b style="left:1051.5px;top:675.6px">52.8</b>
<b style="left:1139.5px;top:675.6px">52.7</b>
<b style="left:1207.5px;top:675.6px">66.7</b>
<b style="left:1229.5px;top:723.6px">41.5</b>
<b style="left:1229.5px;top:790.6px">43.2</b>
<b style="left:1230.5px;top:838.6px">84.9</b>
<b style="left:1134.5px;top:832.6px">23.9</b>
<b style="left:1121.5px;top:871.6px">58.5</b>
<b style="left:1330.5px;top:825.6px">13.1</b>
<b style="left:1427.5px;top:667.6px">27.3</b>
<b style="left:1427.5px;top:731.6px">28.6</b>
<b style="left:1426.5px;top:824.6px">70.2</b>
<i style="left:61px;top:310px;width:27px;height:69px;background:#800000;border:1px solid #000"></i>
<i style="left:61px;top:390px;width:27px;height:69px;background:#c82800;border:1px solid #000"></i>
<i style="left:61px;top:469px;width:27px;height:69px;background:#ff6600;border:1px solid #000"></i>
<i style="left:61px;top:548px;width:27px;height:69px;background:#ffa020;border:1px solid #000"></i>
<i style="left:61px;top:627px;width:27px;height:69px;background:#ffbb2a;border:1px solid #000"></i>
<i style="left:61px;top:707px;width:27px;height:69px;background:#ffd633;border:1px solid #000"></i>
<i style="left:61px;top:786px;width:27px;height:69px;background:#ffe84c;border:1px solid #000"></i>
<i style="left:61px;top:865px;width:27px;height:69px;background:#ffff66;border:1px solid #000"></i>
<b style="left:96px;top:299.1px">111</b>
<b style="left:96px;top:378.5px">98.4</b>
<b style="left:96px;top:457.9px">86</b>
<b style="left:96px;top:537.3px">73.6</b>
<b style="left:96px;top:616.7px">61.2</b>
<b style="left:96px;top:696.1px">48.8</b>
<b style="left:96px;top:775.5px">36.4</b>
<b style="left:96px;top:854.9px">24</b>
<b style="left:96px;top:934.3px">11.6</b></div></body></html>
